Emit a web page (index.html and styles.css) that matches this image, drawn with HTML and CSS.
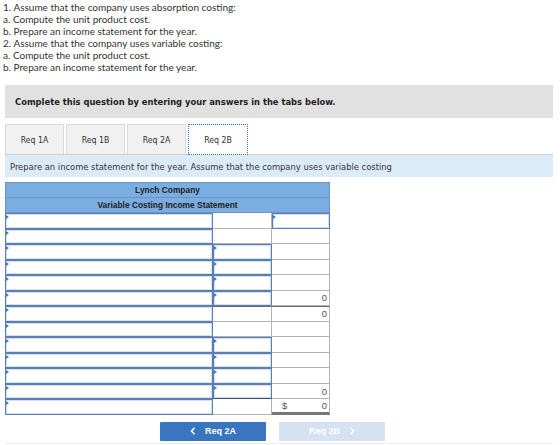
FILE: index.html
```html
<!DOCTYPE html>
<html>
<head>
<meta charset="utf-8">
<link rel="stylesheet" href="styles.css">
</head>
<body>
<div class="intro">
  <div>1. Assume that the company uses absorption costing:</div>
  <div>a. Compute the unit product cost.</div>
  <div>b. Prepare an income statement for the year.</div>
  <div>2. Assume that the company uses variable costing:</div>
  <div>a. Compute the unit product cost.</div>
  <div>b. Prepare an income statement for the year.</div>
</div>
<div class="wrap">
  <div class="banner">Complete this question by entering your answers in the tabs below.</div>
  <div class="tabs">
    <div class="tab">Req 1A</div>
    <div class="tab">Req 1B</div>
    <div class="tab">Req 2A</div>
    <div class="tab active">Req 2B</div>
  </div>
  <div class="prompt">Prepare an income statement for the year. Assume that the company uses variable costing</div>
  <div class="sheet">
    <div class="head">Lynch Company</div>
    <div class="head">Variable Costing Income Statement</div>
    <!-- row 1 -->
    <div class="c in"></div><div class="c st"></div><div class="c in"></div>
    <!-- row 2 -->
    <div class="c in"></div><div class="c st"></div><div class="c st"></div>
    <!-- row 3 -->
    <div class="c in"></div><div class="c in"></div><div class="c st"></div>
    <!-- row 4 -->
    <div class="c in"></div><div class="c in"></div><div class="c st"></div>
    <!-- row 5 -->
    <div class="c in"></div><div class="c in"></div><div class="c st"></div>
    <!-- row 6 -->
    <div class="c in"></div><div class="c in"></div><div class="c st num">0</div>
    <!-- row 7 -->
    <div class="c in"></div><div class="c st topline"></div><div class="c st num topline">0</div>
    <!-- row 8 -->
    <div class="c in"></div><div class="c st"></div><div class="c st"></div>
    <!-- row 9 -->
    <div class="c in"></div><div class="c in"></div><div class="c st"></div>
    <!-- row 10 -->
    <div class="c in"></div><div class="c in"></div><div class="c st"></div>
    <!-- row 11 -->
    <div class="c in"></div><div class="c in"></div><div class="c st"></div>
    <!-- row 12 -->
    <div class="c in"></div><div class="c in dark"></div><div class="c st num">0</div>
    <!-- row 13 -->
    <div class="c in"></div><div class="c st"></div><div class="c st num total"><span>$</span><span>0</span></div>
  </div>
  <div class="nav">
    <div class="btn prev"><svg width="6" height="8" viewBox="0 0 6 8"><path d="M4.5 0.8 L1.5 4 L4.5 7.2" fill="none" stroke="#fff" stroke-width="1.5"/></svg><span>Req 2A</span></div>
    <div class="btn next"><span>Req 2B</span><svg width="6" height="8" viewBox="0 0 6 8"><path d="M1.5 0.8 L4.5 4 L1.5 7.2" fill="none" stroke="#fff" stroke-width="1.5"/></svg></div>
  </div>
  <div class="rule"></div>
</div>
</body>
</html>
```

FILE: styles.css
```css
html, body {
  margin: 0;
  padding: 0;
  background: #fff;
}
body {
  width: 560px;
  height: 445px;
  overflow: hidden;
}
.intro {
  font-family: Lato, "Open Sans", sans-serif;
  font-size: 10px;
  line-height: 12px;
  color: #333;
  padding: 1px 0 0 3px;
}
.wrap {
  margin: 12px 0 0 5px;
  width: 548px;
}
.banner {
  background: #e1e1e1;
  height: 33px;
  box-sizing: border-box;
  padding-left: 10px;
  display: flex;
  align-items: center;
  font-family: "DejaVu Sans Condensed", "DejaVu Sans", sans-serif;
  font-weight: bold;
  font-size: 9.3px;
  color: #222;
}
.tabs {
  margin-top: 6px;
  display: flex;
  gap: 2px;
  height: 30px;
  border-bottom: 1px solid #cfcfcf;
}
.tab {
  width: 59px;
  box-sizing: border-box;
  background: #f1f1f1;
  border: 1px solid #dadada;
  border-bottom: none;
  display: flex;
  align-items: center;
  justify-content: center;
  font-family: "DejaVu Sans Condensed", "DejaVu Sans", sans-serif;
  font-size: 8.7px;
  color: #333;
}
.tab.active {
  background: #fff;
  border: 1px dotted #3b6fb8;
  margin-bottom: -1px;
  width: 60px;
}
.prompt {
  background: #dcebf8;
  height: 22px;
  box-sizing: border-box;
  padding-left: 5px;
  display: flex;
  align-items: center;
  font-family: "DejaVu Sans Condensed", "DejaVu Sans", sans-serif;
  font-size: 9.3px;
  color: #333;
}
.sheet {
  margin-top: 5px;
  width: 325px;
  display: grid;
  grid-template-columns: 208px 59px 58px;
  grid-template-rows: 15px 16px repeat(13, 15.54px);
}
.head {
  grid-column: 1 / 4;
  background: #7aaee3;
  border: 1px solid #6f93bd;
  border-bottom: none;
  display: flex;
  align-items: center;
  justify-content: center;
  font-family: "Liberation Sans", Arial, sans-serif;
  font-weight: bold;
  font-size: 8.4px;
  color: #222;
}
.head + .head {
  border-top: 1px solid #6f93bd;
  border-bottom: 1px solid #6f93bd;
}
.c {
  box-sizing: border-box;
  position: relative;
  font-family: "Liberation Sans", Arial, sans-serif;
  font-size: 9.5px;
  color: #555;
}
.in {
  border: 1px solid #5b7fae;
  box-shadow: inset 0 0 0 1px #d3e0f0;
  background: #fff;
}
.in::before {
  content: "";
  position: absolute;
  left: 0;
  top: 1px;
  border-top: 2px solid transparent;
  border-bottom: 2px solid transparent;
  border-left: 3px solid #3e7bd4;
}
.in.dark {
  border-bottom-color: #2f4f7f;
}
.st {
  border-right: 1px solid #b3b3b3;
  border-bottom: 1px solid #b3b3b3;
}
.num {
  display: flex;
  align-items: center;
  justify-content: flex-end;
  padding-right: 2px;
}
.topline {
  border-top: 1px solid #6a6a6a;
}
.total {
  justify-content: space-between;
  padding-left: 10px;
  border-bottom: 3px solid #777;
}
.nav {
  margin-top: 7px;
  margin-left: 155px;
  display: flex;
  gap: 13px;
}
.btn {
  width: 106px;
  height: 19px;
  box-sizing: border-box;
  display: flex;
  align-items: center;
  justify-content: center;
  gap: 9px;
  font-family: "Liberation Sans", Arial, sans-serif;
  font-weight: bold;
  font-size: 9px;
  color: #fff;
  border-radius: 1px;
}
.prev {
  background: #3a76bf;
}
.next {
  background: #d5e2f1;
}
.rule {
  margin-top: 2px;
  height: 1px;
  background: #eeeeee;
}
```
